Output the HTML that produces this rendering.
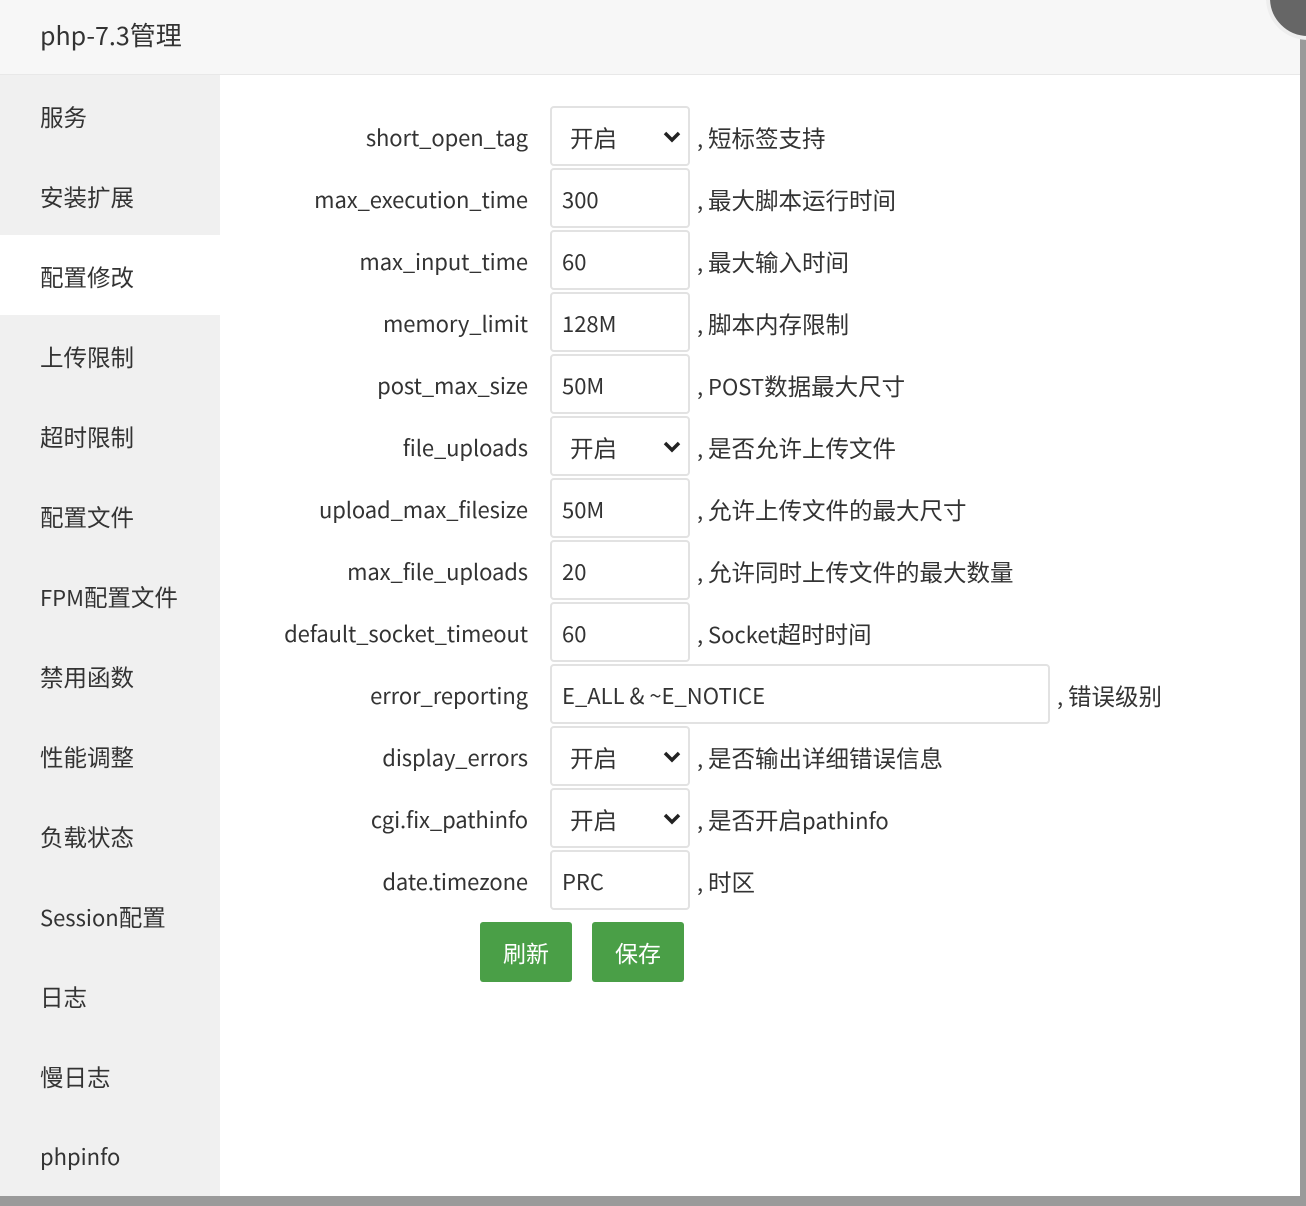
<!DOCTYPE html>
<html><head><meta charset="utf-8"><style>
*{box-sizing:border-box;margin:0;padding:0}
body{width:1306px;height:1206px;background:#9a9a9a;position:relative;overflow:hidden;font-family:"Noto Sans CJK SC","Liberation Sans",sans-serif;color:#333}
.dlg{position:absolute;left:0;top:0;width:1300px;height:1196px;background:#fff}
.hd{height:75px;background:#f7f7f7;border-bottom:1px solid #e8e8e8;font-size:25px;line-height:70px;padding-left:40px;color:#333}
.sb{position:absolute;left:0;top:75px;width:220px;height:1121px;background:#f0f0f0}
.sb div{height:80px;line-height:82px;padding-left:40px;font-size:22px;color:#333}
.sb .a{background:#fff}
c{font-size:23.5px}
.row{position:absolute;left:220px;height:60px;width:1000px}
.lb{position:absolute;right:692px;top:0;line-height:62px;font-size:22px;white-space:nowrap;letter-spacing:-0.1px}
.in{position:absolute;left:330px;top:0;width:140px;height:60px;border:2px solid #e2e2e2;border-radius:4px;line-height:58px;padding-left:10px;font-size:22px}
.sel{padding-left:18px}
.sel svg{position:absolute;right:6px;top:22px}
.ds{position:absolute;top:0;line-height:62px;font-size:22px;white-space:nowrap}
.btn{position:absolute;top:922px;width:92px;height:60px;background:#4a9f47;color:#fff;border-radius:3px;font-size:23px;text-align:center;line-height:60px}
.cl{position:absolute;left:1266px;top:-44px;width:84px;height:84px;border-radius:50%;background:#666;border:4px solid #eee}
</style></head><body>
<div class="dlg">
<div class="hd">php-7.3<c style="font-size:26px">管理</c></div>
<div class="sb">
<div><c>服务</c></div><div><c>安装扩展</c></div><div class="a"><c>配置修改</c></div><div><c>上传限制</c></div><div><c>超时限制</c></div><div><c>配置文件</c></div><div>FPM<c>配置文件</c></div><div><c>禁用函数</c></div><div><c>性能调整</c></div><div><c>负载状态</c></div><div>Session<c>配置</c></div><div><c>日志</c></div><div><c>慢日志</c></div><div>phpinfo</div>
</div>

<div class="row" style="top:106px"><span class="lb">short_open_tag</span><div class="in sel"><c>开启</c><svg width="20" height="14" viewBox="0 0 20 14"><path d="M3 3l7 7 7-7" stroke="#222" stroke-width="3.5" fill="none"/></svg></div><span class="ds" style="left:477px">, <c>短标签支持</c></span></div>
<div class="row" style="top:168px"><span class="lb">max_execution_time</span><div class="in">300</div><span class="ds" style="left:477px">, <c>最大脚本运行时间</c></span></div>
<div class="row" style="top:230px"><span class="lb">max_input_time</span><div class="in">60</div><span class="ds" style="left:477px">, <c>最大输入时间</c></span></div>
<div class="row" style="top:292px"><span class="lb">memory_limit</span><div class="in">128M</div><span class="ds" style="left:477px">, <c>脚本内存限制</c></span></div>
<div class="row" style="top:354px"><span class="lb">post_max_size</span><div class="in">50M</div><span class="ds" style="left:477px">, POST<c>数据最大尺寸</c></span></div>
<div class="row" style="top:416px"><span class="lb">file_uploads</span><div class="in sel"><c>开启</c><svg width="20" height="14" viewBox="0 0 20 14"><path d="M3 3l7 7 7-7" stroke="#222" stroke-width="3.5" fill="none"/></svg></div><span class="ds" style="left:477px">, <c>是否允许上传文件</c></span></div>
<div class="row" style="top:478px"><span class="lb">upload_max_filesize</span><div class="in">50M</div><span class="ds" style="left:477px">, <c>允许上传文件的最大尺寸</c></span></div>
<div class="row" style="top:540px"><span class="lb">max_file_uploads</span><div class="in">20</div><span class="ds" style="left:477px">, <c>允许同时上传文件的最大数量</c></span></div>
<div class="row" style="top:602px"><span class="lb">default_socket_timeout</span><div class="in">60</div><span class="ds" style="left:477px">, Socket<c>超时时间</c></span></div>
<div class="row" style="top:664px"><span class="lb">error_reporting</span><div class="in" style="width:500px">E_ALL &amp; ~E_NOTICE</div><span class="ds" style="left:837px">, <c>错误级别</c></span></div>
<div class="row" style="top:726px"><span class="lb">display_errors</span><div class="in sel"><c>开启</c><svg width="20" height="14" viewBox="0 0 20 14"><path d="M3 3l7 7 7-7" stroke="#222" stroke-width="3.5" fill="none"/></svg></div><span class="ds" style="left:477px">, <c>是否输出详细错误信息</c></span></div>
<div class="row" style="top:788px"><span class="lb">cgi.fix_pathinfo</span><div class="in sel"><c>开启</c><svg width="20" height="14" viewBox="0 0 20 14"><path d="M3 3l7 7 7-7" stroke="#222" stroke-width="3.5" fill="none"/></svg></div><span class="ds" style="left:477px">, <c>是否开启</c>pathinfo</span></div>
<div class="row" style="top:850px"><span class="lb">date.timezone</span><div class="in">PRC</div><span class="ds" style="left:477px">, <c>时区</c></span></div>

<div class="btn" style="left:480px">刷新</div>
<div class="btn" style="left:592px">保存</div>
</div>
<div class="cl"></div>
</body></html>
